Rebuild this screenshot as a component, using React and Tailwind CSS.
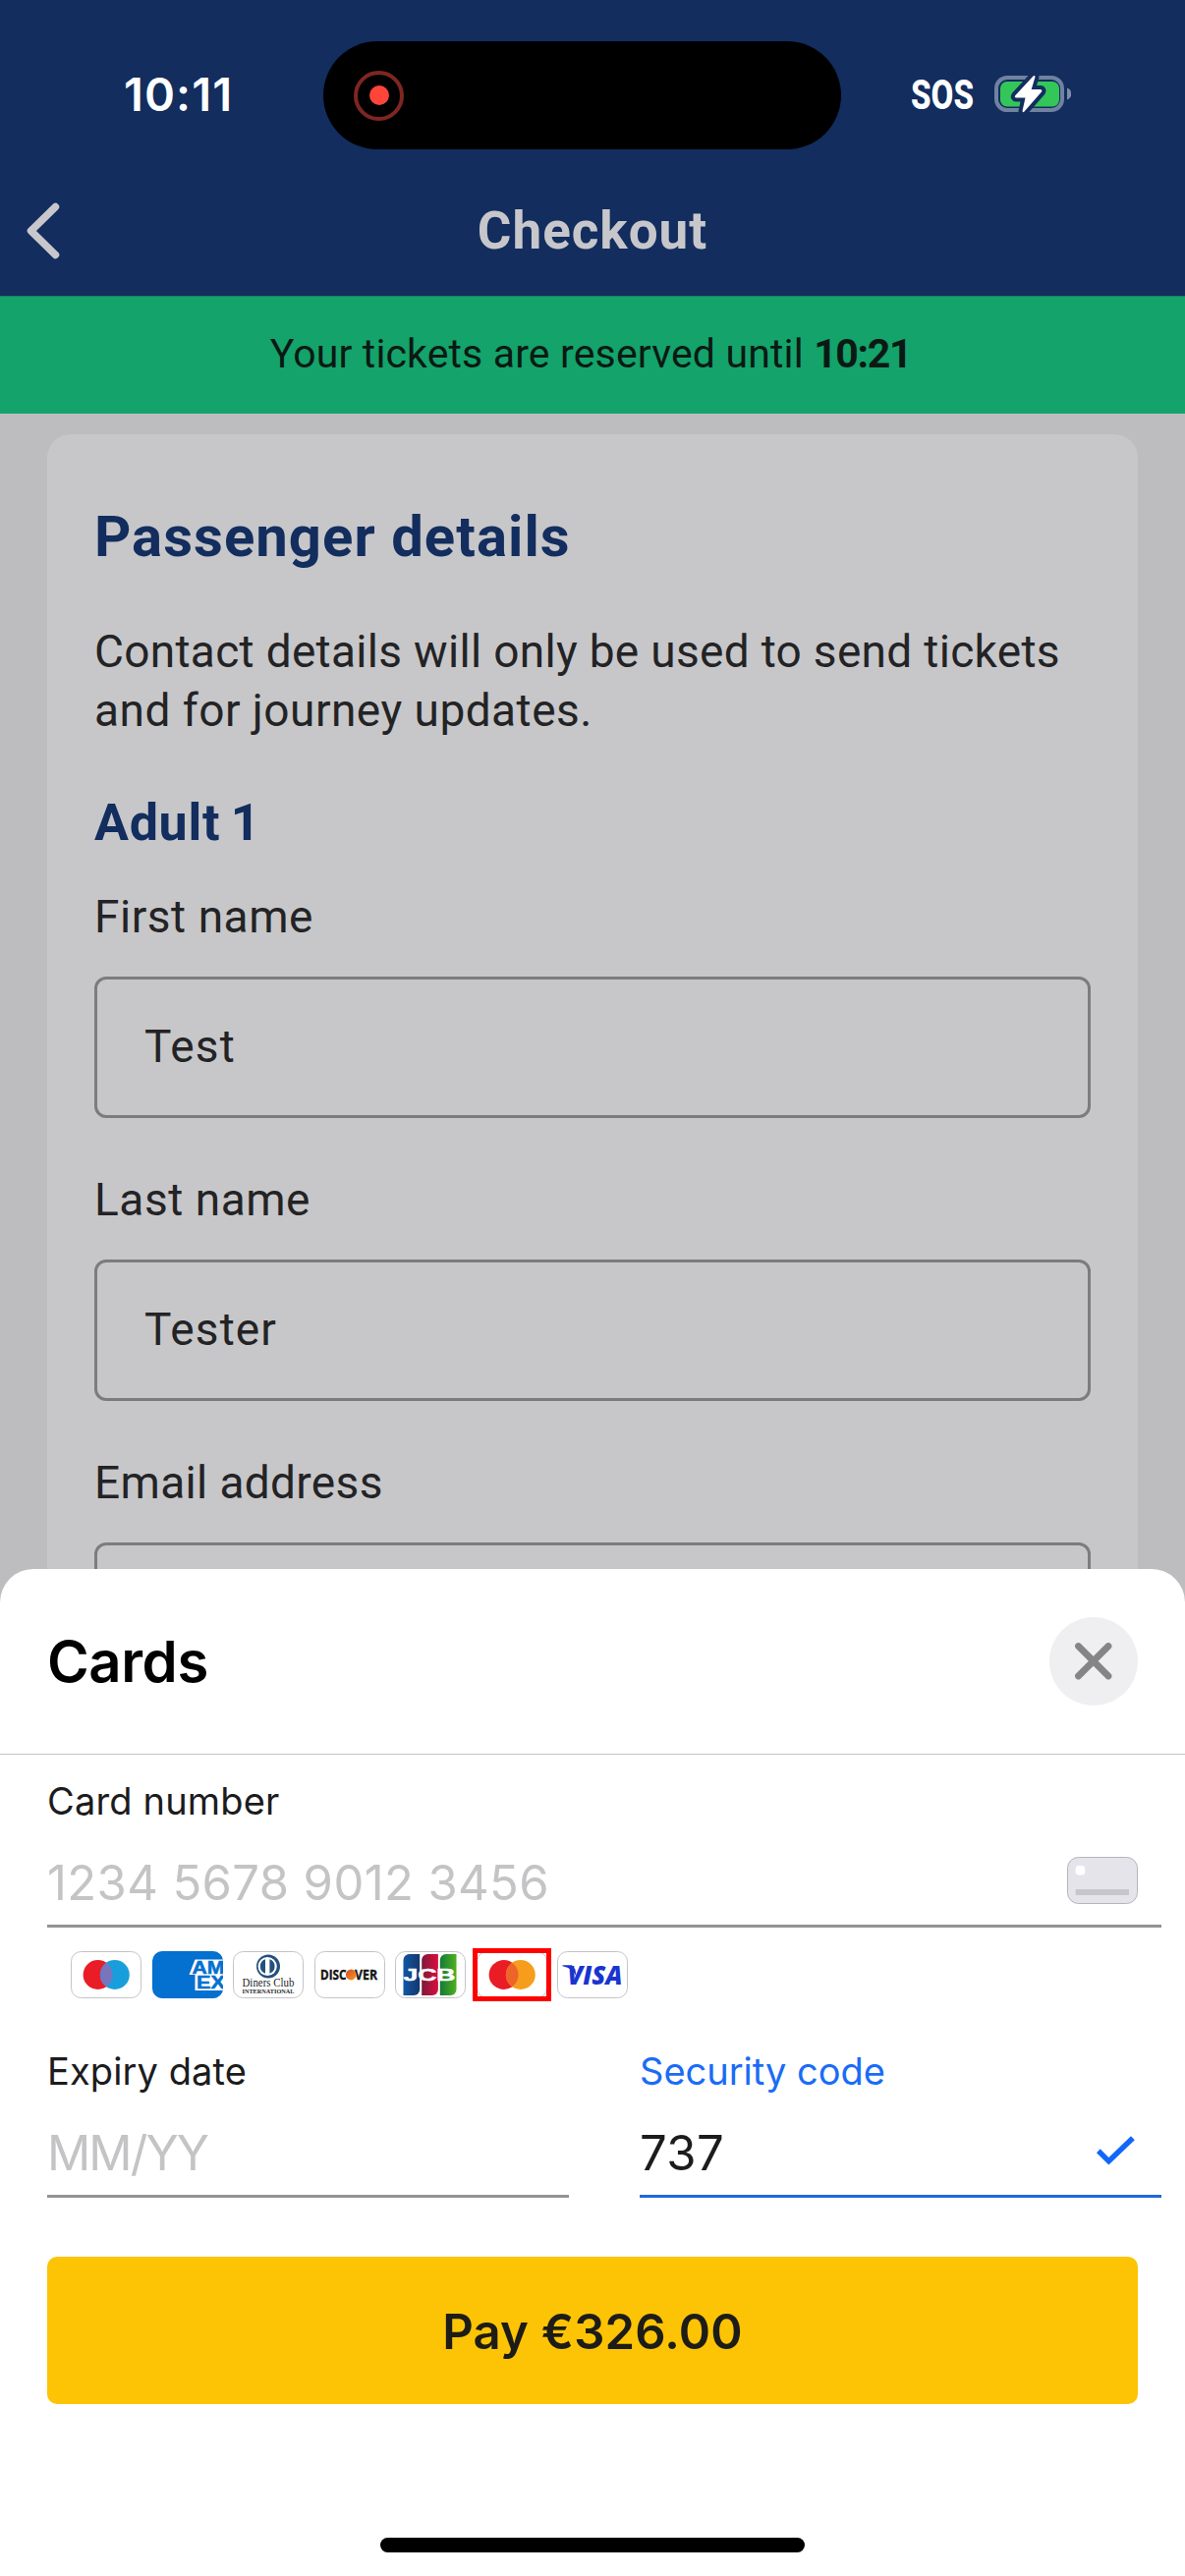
import React from "react";

const systemFont = "font-['Inter',sans-serif]";
const brandFont = "font-['Roboto',sans-serif]";

function BatteryIcon() {
  return (
    <svg width="80" height="42" viewBox="0 0 80 42" className="block">
      <rect x="4" y="4" width="67" height="33" rx="11" fill="none" stroke="#7182a1" strokeWidth="4" />
      <path d="M76 14.5c3 .8 4.2 3.300 4.200 6s-1.200 5.200-4.200 6z" fill="#7f8da9" />
      <rect x="8" y="8" width="60" height="25.500" rx="7" fill="#33c759" />
      <path
        d="M41.500 2.500 23.200 22.300q-1.200 2 1 2.200h9.300l-3 13.500q.4 2 2 .5L50.200 18.300q.8-2-1.200-2.200h-9.300l3.800-12.800q-.2-2-2-.8z"
        fill="#fff"
        stroke="#122d5e"
        strokeWidth="8"
        strokeLinejoin="round"
        paintOrder="stroke"
      />
    </svg>
  );
}

function StatusBar() {
  return (
    <div className="flex h-[180px] items-start pt-[42px]">
      <div className={`${systemFont} h-[110px] w-[329px] pl-[126px] text-[47px] leading-[108px] font-semibold tracking-[1.1px] text-white`}>
        10:11
      </div>
      <div className="flex h-[110px] w-[527px] items-center rounded-full bg-black pl-[31px]">
        <div className="flex size-[51px] items-center justify-center rounded-full border-4 border-[#7e2622]">
          <div className="size-5 rounded-full bg-[#ff453a]" />
        </div>
      </div>
      <div className="flex h-[107px] flex-1 items-center pl-[71px]">
        <div className="w-[83px]">
          <div className={`${brandFont} w-[90px] origin-left scale-x-[0.77] text-[43px] leading-[44px] font-extrabold text-white`}>
            SOS
          </div>
        </div>
        <BatteryIcon />
      </div>
    </div>
  );
}

function TitleBar() {
  return (
    <div className="flex h-[121px] items-start">
      <div className="flex h-[109px] w-[80px] items-center pl-[23px]">
        <svg width="42" height="64" viewBox="0 0 42 64" fill="none">
          <path d="M33.500 7.500 8.500 32l25 24.500" stroke="#c8c7cc" strokeWidth="7.500" strokeLinecap="round" strokeLinejoin="round" />
        </svg>
      </div>
      <h1 className={`${brandFont} h-[109px] flex-1 text-center text-[53px] leading-[111px] font-bold tracking-[1px] text-[#c7c7cb]`}>
        Checkout
      </h1>
      <div className="w-[80px]" />
    </div>
  );
}

function FormField({ label, value, labelTracking = "tracking-[0.54px]" }) {
  return (
    <div className="mb-[52px]">
      <div className={`pt-px text-[46px] leading-[60px] ${labelTracking}`}>{label}</div>
      <div className="mt-[31px] h-[144px] rounded-xl border-[3px] border-[#7b7c7e] pl-12 text-[46px] leading-[137px] tracking-[1.1px]">
        {value}
      </div>
    </div>
  );
}

function PassengerDetails() {
  return (
    <section className={`${brandFont} mx-12 mt-[21px] h-[1300px] rounded-t-3xl bg-[#c7c7c9] px-12 pt-[68px] text-[#232325]`}>
      <h2 className="text-[58px] leading-[73px] font-bold tracking-[1.05px] text-[#122d5e]">Passenger details</h2>
      <p className="mt-[50px] text-[46px] leading-[60px] whitespace-nowrap">
        <span className="block tracking-[0.31px]">Contact details will only be used to send tickets</span>
        <span className="block tracking-[0.48px]">and for journey updates.</span>
      </p>
      <h3 className="mt-[55px] mb-[34px] text-[52px] leading-[60px] font-bold tracking-[0.7px] text-[#122d5e] [word-spacing:-3px]">Adult 1</h3>
      <FormField label="First name" value="Test" />
      <FormField label="Last name" value="Tester" />
      <FormField label="Email address" value="" labelTracking="tracking-[0.35px]" />
    </section>
  );
}

const tile = "h-12 w-[72px] shrink-0";

function Frame({ children, stroke = "#c4c3c9" }) {
  return (
    <svg viewBox="0 0 72 48" className={tile}>
      <rect x=".5" y=".5" width="71" height="47" rx="10" fill="#fff" stroke={stroke} />
      {children}
    </svg>
  );
}

function Circles({ left, right, overlap }) {
  return (
    <>
      <circle cx="27.600" cy="24" r="15" fill={left} />
      <circle cx="44.800" cy="24" r="15" fill={right} />
      <path d="M36.200 11.700a15 15 0 0 1 0 24.600a15 15 0 0 1 0-24.600z" fill={overlap} />
    </>
  );
}

function Amex() {
  return (
    <svg viewBox="0 0 72 48" className={tile}>
      <defs>
        <clipPath id="amex-clip">
          <rect width="72" height="48" rx="10" />
        </clipPath>
      </defs>
      <g clipPath="url(#amex-clip)">
        <rect width="72" height="48" fill="#0470d0" />
        <path d="M43.500 8.500H72v31.500H43.500V24H37.500z" fill="#fff" />
        <g
          fill="#0470d0"
          stroke="#0470d0"
          strokeWidth=".5"
          fontFamily="Liberation Sans, sans-serif"
          fontWeight="700"
          fontSize="17.500"
        >
          <text x="40.500" y="22.800" textLength="33" lengthAdjust="spacingAndGlyphs">AM</text>
          <text x="45" y="38" textLength="29" lengthAdjust="spacingAndGlyphs">EX</text>
        </g>
      </g>
    </svg>
  );
}

function Diners() {
  return (
    <Frame>
      <circle cx="36" cy="15.500" r="12" fill="#24507f" />
      <circle cx="35.200" cy="15.500" r="9.600" fill="#fff" />
      <path d="M33 8.300a7.600 7.600 0 0 0 0 14.400zM37.400 8.300a7.600 7.600 0 0 1 0 14.400z" fill="#24507f" />
      <g fill="#26262a" fontFamily="Liberation Serif, serif">
        <text x="9.500" y="36" fontSize="12.500" textLength="53" lengthAdjust="spacingAndGlyphs">Diners Club</text>
        <text x="9.500" y="42.700" fontSize="6.500" fontWeight="700" textLength="53" lengthAdjust="spacingAndGlyphs">INTERNATIONAL</text>
      </g>
    </Frame>
  );
}

function Discover() {
  return (
    <Frame>
      <defs>
        <linearGradient id="discover-dot" x1="0" y1="0" x2="1" y2="1">
          <stop offset="0" stopColor="#d9481c" />
          <stop offset="1" stopColor="#f79a2c" />
        </linearGradient>
      </defs>
      <g fill="#151515" stroke="#151515" strokeWidth=".4" fontFamily="Open Sans, sans-serif" fontWeight="700" fontSize="14">
        <text x="6" y="28.700" textLength="26.500" lengthAdjust="spacingAndGlyphs">DISC</text>
        <text x="41" y="28.700" textLength="23" lengthAdjust="spacingAndGlyphs">VER</text>
      </g>
      <circle cx="37.300" cy="24" r="5.400" fill="url(#discover-dot)" />
    </Frame>
  );
}

const jcbStripes = [
  { id: "jcb-blue", x: 8.5, from: "#1356a4", to: "#12386f" },
  { id: "jcb-red", x: 27.2, from: "#7b1a3c", to: "#dc0d3c" },
  { id: "jcb-green", x: 45.8, from: "#137a37", to: "#4fb01f" },
];

function Jcb() {
  return (
    <Frame>
      {jcbStripes.map((s) => (
        <g key={s.id}>
          <linearGradient id={s.id}>
            <stop offset="0" stopColor={s.from} />
            <stop offset="1" stopColor={s.to} />
          </linearGradient>
          <path transform={`translate(${s.x} 3)`} d="M6 0h10.700v36a6 6 0 0 1-6 6H0V6a6 6 0 0 1 6-6z" fill={`url(#${s.id})`} />
        </g>
      ))}
      <text
        x="8.500"
        y="29.800"
        fill="#fff"
        stroke="#fff"
        strokeWidth=".5"
        fontFamily="Liberation Sans, sans-serif"
        fontWeight="700"
        fontSize="17"
        textLength="53"
        lengthAdjust="spacingAndGlyphs"
      >
        JCB
      </text>
    </Frame>
  );
}

function Visa() {
  return (
    <Frame>
      <path d="M5.500 14.200h9.500l3.500 4.500 1 7c-2-5-6.500-9-14-10.500z" fill="#1a34cf" />
      <text
        x="10.500"
        y="33.600"
        fill="#1a34cf"
        fontFamily="Open Sans, sans-serif"
        fontWeight="800"
        fontStyle="italic"
        fontSize="26.500"
        textLength="56"
        lengthAdjust="spacingAndGlyphs"
      >
        VISA
      </text>
    </Frame>
  );
}

function CardBrands() {
  return (
    <div className="mt-6 flex h-12 gap-[10.5px] pl-6">
      <Frame>
        <Circles left="#ea1c26" right="#189fdb" overlap="#7675bd" />
      </Frame>
      <Amex />
      <Diners />
      <Discover />
      <Jcb />
      <div className="relative h-12 w-[72px] shrink-0">
        <Frame>
          <Circles left="#ea1c26" right="#f69e1c" overlap="#ee6529" />
        </Frame>
        <div className="absolute -top-[3px] -left-1 h-[54px] w-[80px] border-[5px] border-[#fe0000]" />
      </div>
      <Visa />
    </div>
  );
}

function CardPlaceholderIcon() {
  return (
    <svg viewBox="0 0 72 48" className={tile}>
      <rect x=".5" y=".5" width="71" height="47" rx="11" fill="#e5e4ea" stroke="#b5b4bb" />
      <rect x="8.700" y="9" width="9.500" height="9.500" rx="3.200" fill="#fff" />
      <rect x="8.700" y="33" width="54.300" height="6" fill="#c7c6cc" />
    </svg>
  );
}

function Sheet() {
  return (
    <section className={`${systemFont} absolute inset-x-0 bottom-0 flex h-[1025px] flex-col rounded-t-[34px] bg-white text-[#1c1c1e]`}>
      <header className="flex h-[189px] items-center justify-between border-b border-[#c3c3c6] px-12">
        <h2 className="text-[58px] leading-[72px] font-semibold tracking-[-0.4px] text-black">Cards</h2>
        <div className="flex size-[90px] items-center justify-center rounded-full bg-[#efeff1]">
          <svg width="38" height="38" viewBox="0 0 38 38" fill="none">
            <path d="m3.500 3.500 30.500 30.500M34 3.500 3.500 34" stroke="#858588" strokeWidth="6.800" strokeLinecap="round" />
          </svg>
        </div>
      </header>

      <div className="pt-[22px] pr-6 pl-12">
        <div className="text-[38px] leading-[50px] tracking-[0.16px]">Card number</div>
        <div className="mt-[11px] flex h-[93px] items-center justify-between border-b-[3px] border-[#939395] pr-6">
          <div className="pt-1.5 text-[49px] leading-[60px] tracking-[0.38px] text-[#c4c4c6]">1234 5678 9012 3456</div>
          <CardPlaceholderIcon />
        </div>

        <CardBrands />

        <div className="mt-[49px] grid grid-cols-2 gap-[72px]">
          <div>
            <div className="text-[38px] leading-[50px] tracking-[0.1px]">Expiry date</div>
            <div className="mt-[11px] flex h-[93px] items-center border-b-[3px] border-[#939395]">
              <div className="pt-1.5 text-[49px] leading-[60px] tracking-[-1.9px] text-[#c4c4c6]">MM/YY</div>
            </div>
          </div>
          <div>
            <div className="text-[38px] leading-[50px] text-[#1a6cf6]">Security code</div>
            <div className="mt-[11px] flex h-[93px] items-center justify-between border-b-[3px] border-[#1f69da] pr-[26px]">
              <div className="pt-1.5 text-[49px] leading-[60px] tracking-[0.4px]">737</div>
              <svg width="41" height="31" viewBox="0 0 41 31">
                <path d="m1 17.300 3.700-4 8.700 8.700L36 .3l3.800 4L13.400 29.600z" fill="#1167fa" />
              </svg>
            </div>
          </div>
        </div>
      </div>

      <button className="mx-12 mt-[60px] h-[150px] shrink-0 rounded-[10px] bg-[#fdc405] text-[49px] font-semibold leading-[150px] tracking-[0.2px] text-[#1d1c17]">
        <span className="block pt-0.5">Pay €326.00</span>
      </button>
      <div className="mt-[136px] h-[15px] w-[432px] shrink-0 self-center rounded-full bg-black" />
    </section>
  );
}

export default function App() {
  return (
    <div className="relative flex h-[2622px] w-[1206px] flex-col overflow-hidden bg-[#bdbdbf]">
      <div className="h-[301px] shrink-0 bg-[#122d5e]">
        <StatusBar />
        <TitleBar />
      </div>
      <div className={`${brandFont} h-[120px] shrink-0 border-t border-[#1d7a5f] bg-[#14a36a] pr-1 text-center text-[41px] leading-[117px] text-[#0b1914]`}>
        <span className="tracking-[0.15px]">Your tickets are reserved until </span>
        <b className="font-bold tracking-[-1.3px]">10:21</b>
      </div>
      <PassengerDetails />
      <Sheet />
    </div>
  );
}
